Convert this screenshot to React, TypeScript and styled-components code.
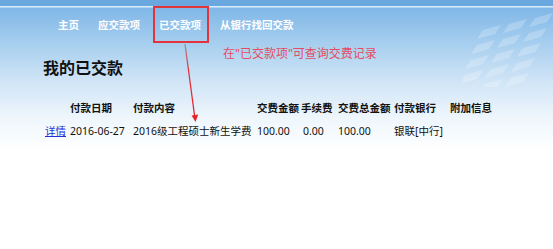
import React from "react";
import styled, { createGlobalStyle, css } from "styled-components";

const GlobalStyle = createGlobalStyle`
  html, body { margin: 0; padding: 0; background: #ffffff; }
  body { font-family: "Noto Sans", "Noto Sans CJK SC", sans-serif; color: #111; }
`;

const Page = styled.div`
  position: relative;
  width: 553px;
  height: 249px;
  overflow: hidden;
  background: linear-gradient(
    to bottom,
    #6aa7de 0px,
    #6aa7de 6px,
    #d8ecfa 6px,
    #d8ecfa 7px,
    #80b7e7 8px,
    #a3ccee 40px,
    #cfe4f6 80px,
    #eef6fc 118px,
    #ffffff 150px
  );
`;

const Nav = styled.nav`
  display: flex;
  gap: 19px;
  padding: 18px 0 0 58px;
`;

const NavItem = styled.span<{ $marked?: boolean }>`
  position: relative;
  font-family: "Noto Sans CJK SC", sans-serif;
  font-size: 10.5px;
  line-height: 14px;
  font-weight: 700;
  color: #ffffff;
  ${(p) =>
    p.$marked &&
    css`
      &::after {
        content: "";
        position: absolute;
        left: -6px;
        right: -8px;
        top: -12px;
        bottom: -11px;
        border: 2px solid #e2343a;
      }
    `}
`;

const Heading = styled.h1`
  margin: 24px 0 0 43px;
  font-family: "Noto Sans CJK SC", sans-serif;
  font-size: 16px;
  line-height: 22px;
  font-weight: 700;
  color: #111;
`;

const Table = styled.div`
  display: grid;
  grid-template-columns: 25px 63px 124px 44px 37px 56px 56px auto;
  row-gap: 7px;
  margin: 22px 0 0 45px;
`;

const Cell = styled.span<{ $head?: boolean; $indent?: number }>`
  font-family: "Noto Sans", "Noto Sans CJK SC", sans-serif;
  font-size: 10.5px;
  line-height: 16px;
  white-space: nowrap;
  font-weight: ${(p) => (p.$head ? 700 : 400)};
  padding-left: ${(p) => p.$indent ?? 0}px;
  color: #111;
`;

const Link = styled.a`
  font-family: "Noto Sans CJK SC", sans-serif;
  font-size: 10.5px;
  line-height: 16px;
  color: #2330d6;
  text-decoration: underline;
`;

const Note = styled.div`
  position: absolute;
  left: 223px;
  top: 46px;
  font-family: "Noto Sans", "Noto Sans CJK SC", sans-serif;
  font-size: 12px;
  line-height: 16px;
  color: #e54c62;
`;

const Overlay = styled.svg`
  position: absolute;
  left: 0;
  top: 0;
  pointer-events: none;
`;

const Deco = styled.svg`
  position: absolute;
  right: 0;
  top: 7px;
  pointer-events: none;
`;

const headers = ["", "付款日期", "付款内容", "交费金额", "手续费", "交费总金额", "付款银行", "附加信息"];

export default function App() {
  return (
    <Page>
      <GlobalStyle />
      <Deco width="90" height="80" viewBox="0 0 90 80">
        <g fill="#ffffff" opacity="0.22">
          {[0, 1, 2, 3, 4].map((r) =>
            [0, 1, 2].map((c) => {
              const x = 90 - c * 26 - r * 6;
              const y = 6 + r * 15 + c * 6;
              return (
                <path
                  key={`${r}-${c}`}
                  d={`M${x} ${y} l-18 5 l-6 9 l18 -5 z`}
                />
              );
            })
          )}
        </g>
      </Deco>
      <Nav>
        <NavItem>主页</NavItem>
        <NavItem>应交款项</NavItem>
        <NavItem $marked>已交款项</NavItem>
        <NavItem>从银行找回交款</NavItem>
      </Nav>
      <Heading>我的已交款</Heading>
      <Table>
        {headers.map((h, i) => (
          <Cell key={i} $head>
            {h}
          </Cell>
        ))}
        <Cell>
          <Link href="#">详情</Link>
        </Cell>
        <Cell>2016-06-27</Cell>
        <Cell>2016级工程硕士新生学费</Cell>
        <Cell>100.00</Cell>
        <Cell $indent={2}>0.00</Cell>
        <Cell>100.00</Cell>
        <Cell>银联[中行]</Cell>
        <Cell></Cell>
      </Table>
      <Note>在"已交款项"可查询交费记录</Note>
      <Overlay width="553" height="249" viewBox="0 0 553 249">
        <defs>
          <linearGradient id="arrowLine" x1="0" y1="0" x2="0" y2="1">
            <stop offset="0" stopColor="#b08a8e" />
            <stop offset="0.35" stopColor="#e0353d" />
            <stop offset="1" stopColor="#e8222b" />
          </linearGradient>
        </defs>
        <line x1="185" y1="44" x2="194.6" y2="116" stroke="url(#arrowLine)" strokeWidth="1.3" />
        <path d="M191.6 115.5 L198.2 114.6 L195.5 122 Z" fill="#e8222b" />
      </Overlay>
    </Page>
  );
}
